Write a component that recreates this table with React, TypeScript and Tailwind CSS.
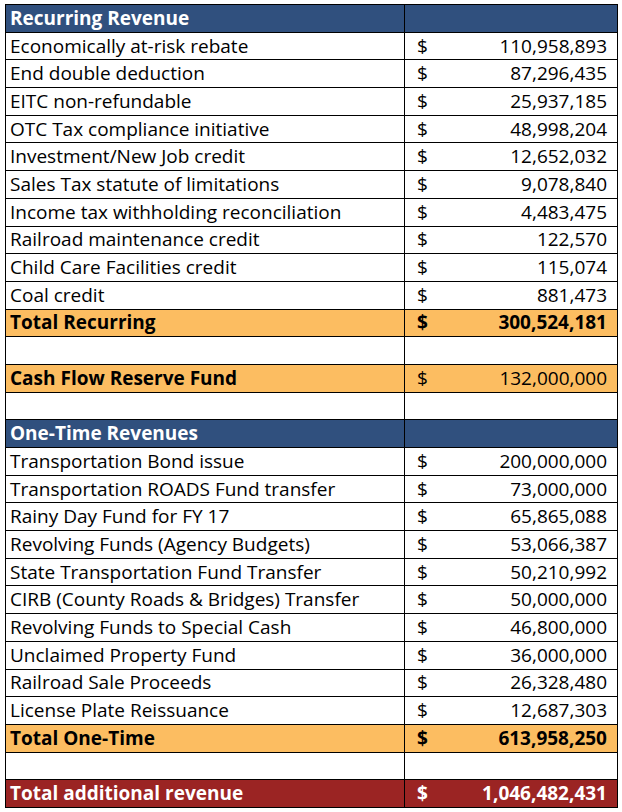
type Row = {
  label?: string;
  value?: string;
  kind: "head" | "item" | "total" | "blank" | "fund" | "grand";
};

const rows: Row[] = [
  { kind: "head", label: "Recurring Revenue" },
  { kind: "item", label: "Economically at-risk rebate", value: "110,958,893" },
  { kind: "item", label: "End double deduction", value: "87,296,435" },
  { kind: "item", label: "EITC non-refundable", value: "25,937,185" },
  { kind: "item", label: "OTC Tax compliance initiative", value: "48,998,204" },
  { kind: "item", label: "Investment/New Job credit", value: "12,652,032" },
  { kind: "item", label: "Sales Tax statute of limitations", value: "9,078,840" },
  { kind: "item", label: "Income tax withholding reconciliation", value: "4,483,475" },
  { kind: "item", label: "Railroad maintenance credit", value: "122,570" },
  { kind: "item", label: "Child Care Facilities credit", value: "115,074" },
  { kind: "item", label: "Coal credit", value: "881,473" },
  { kind: "total", label: "Total Recurring", value: "300,524,181" },
  { kind: "blank" },
  { kind: "fund", label: "Cash Flow Reserve Fund", value: "132,000,000" },
  { kind: "blank" },
  { kind: "head", label: "One-Time Revenues" },
  { kind: "item", label: "Transportation Bond issue", value: "200,000,000" },
  { kind: "item", label: "Transportation ROADS Fund transfer", value: "73,000,000" },
  { kind: "item", label: "Rainy Day Fund for FY 17", value: "65,865,088" },
  { kind: "item", label: "Revolving Funds (Agency Budgets)", value: "53,066,387" },
  { kind: "item", label: "State Transportation Fund Transfer", value: "50,210,992" },
  { kind: "item", label: "CIRB (County Roads & Bridges) Transfer", value: "50,000,000" },
  { kind: "item", label: "Revolving Funds to Special Cash", value: "46,800,000" },
  { kind: "item", label: "Unclaimed Property Fund", value: "36,000,000" },
  { kind: "item", label: "Railroad Sale Proceeds", value: "26,328,480" },
  { kind: "item", label: "License Plate Reissuance", value: "12,687,303" },
  { kind: "total", label: "Total One-Time", value: "613,958,250" },
  { kind: "blank" },
  { kind: "grand", label: "Total additional revenue", value: "1,046,482,431" },
];

const rowStyle: Record<Row["kind"], string> = {
  head: "bg-[#30507e] text-white font-bold",
  item: "bg-white text-black",
  total: "bg-[#fcbd61] text-black font-bold",
  blank: "bg-white",
  fund: "bg-[#fcbd61] text-black",
  grand: "bg-[#9b2423] text-white font-bold",
};

export default function App() {
  return (
    <div className="min-h-screen bg-white pt-[4px] pl-[5px]">
      <div
        className="w-[613px] border-t border-l border-black text-[19px] leading-none"
        style={{ fontFamily: '"Open Sans", "Noto Sans", sans-serif' }}
      >
        {rows.map((r, i) => {
          const labelBold = r.kind === "fund" ? "font-bold" : "";
          return (
            <div
              key={i}
              className={`grid grid-cols-[399px_213px] h-[27.7px] ${rowStyle[r.kind]}`}
            >
              <div
                className={`flex items-center pl-[4px] border-r border-b border-black whitespace-nowrap ${labelBold}`}
              >
                {r.label}
              </div>
              <div className="flex items-center justify-between pl-[12px] pr-[10px] border-r border-b border-black">
                {r.value && (
                  <>
                    <span>$</span>
                    <span>{r.value}</span>
                  </>
                )}
              </div>
            </div>
          );
        })}
      </div>
    </div>
  );
}
